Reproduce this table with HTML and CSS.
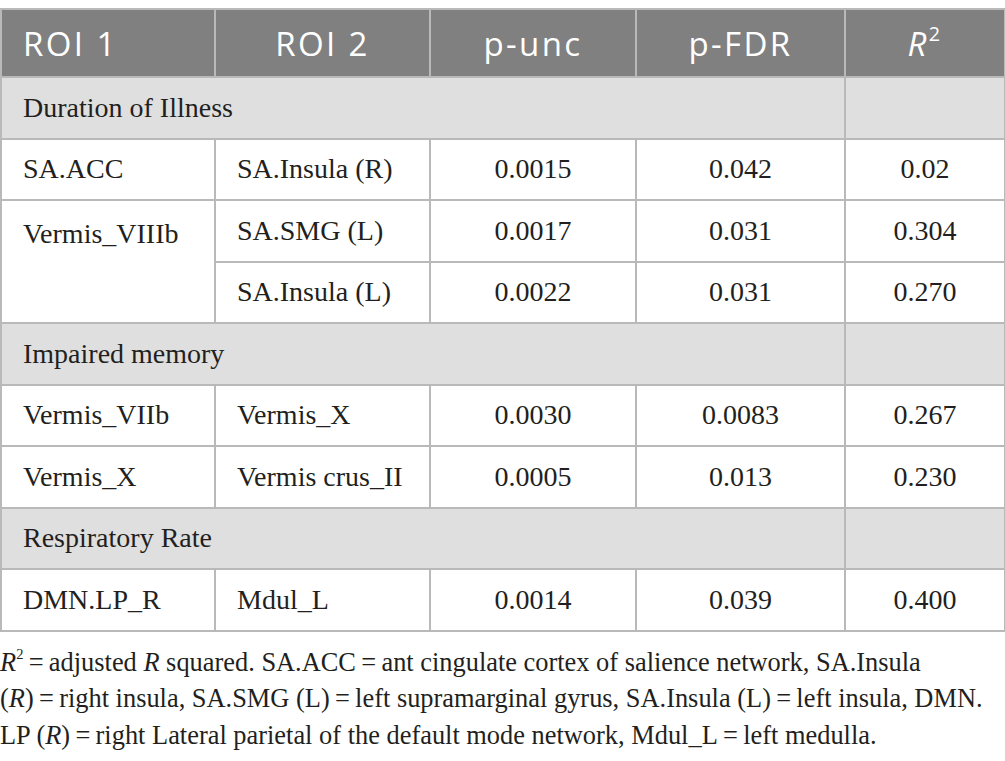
FILE: index.html
```html
<!DOCTYPE html>
<html lang="en">
<head>
<meta charset="utf-8">
<title>Table</title>
<link rel="stylesheet" href="styles.css">
</head>
<body>
<div class="page">
<table class="data">
  <colgroup>
    <col class="c1"><col class="c2"><col class="c3"><col class="c4"><col class="c5">
  </colgroup>
  <thead>
    <tr class="head">
      <th class="left">ROI 1</th>
      <th>ROI 2</th>
      <th>p-unc</th>
      <th>p-FDR</th>
      <th><i>R</i><sup>2</sup></th>
    </tr>
  </thead>
  <tbody>
    <tr class="group"><td colspan="4">Duration of Illness</td><td></td></tr>
    <tr><td>SA.ACC</td><td>SA.Insula (R)</td><td class="num">0.0015</td><td class="num">0.042</td><td class="num">0.02</td></tr>
    <tr><td rowspan="2" class="top">Vermis_VIIIb</td><td>SA.SMG (L)</td><td class="num">0.0017</td><td class="num">0.031</td><td class="num">0.304</td></tr>
    <tr><td>SA.Insula (L)</td><td class="num">0.0022</td><td class="num">0.031</td><td class="num">0.270</td></tr>
    <tr class="group"><td colspan="4">Impaired memory</td><td></td></tr>
    <tr><td>Vermis_VIIb</td><td>Vermis_X</td><td class="num">0.0030</td><td class="num">0.0083</td><td class="num">0.267</td></tr>
    <tr><td>Vermis_X</td><td>Vermis crus_II</td><td class="num">0.0005</td><td class="num">0.013</td><td class="num">0.230</td></tr>
    <tr class="group"><td colspan="4">Respiratory Rate</td><td></td></tr>
    <tr><td>DMN.LP_R</td><td>Mdul_L</td><td class="num">0.0014</td><td class="num">0.039</td><td class="num">0.400</td></tr>
  </tbody>
</table>
<p class="note"><i>R</i><sup>2</sup>&thinsp;=&thinsp;adjusted <i>R</i> squared. SA.ACC&thinsp;=&thinsp;ant cingulate cortex of salience network, SA.Insula<br>(<i>R</i>)&thinsp;=&thinsp;right insula, SA.SMG (L)&thinsp;=&thinsp;left supramarginal gyrus, SA.Insula (L)&thinsp;=&thinsp;left insula, DMN.<br>LP (<i>R</i>)&thinsp;=&thinsp;right Lateral parietal of the default mode network, Mdul_L&thinsp;=&thinsp;left medulla.</p>
</div>
</body>
</html>
```

FILE: styles.css
```css
html, body {
  margin: 0;
  padding: 0;
  background: #ffffff;
}

.page {
  padding-top: 8px;
  width: 1004px;
  color: #231f20;
  font-family: "Liberation Serif", "Times New Roman", serif;
}

.data {
  width: 1004px;
  border-collapse: collapse;
  table-layout: fixed;
  font-size: 28px;
}

.c1 { width: 214px; }
.c2 { width: 215px; }
.c3 { width: 206px; }
.c4 { width: 209px; }
.c5 { width: 160px; }

.data th,
.data td {
  border: 2px solid #b9b9b9;
  padding: 0 0 0 21px;
  text-align: left;
  vertical-align: middle;
  font-weight: normal;
}

.head th {
  height: 66px;
  background: #7f807f;
  color: #ffffff;
  font-family: "Open Sans", "Liberation Sans", sans-serif;
  font-size: 33px;
  letter-spacing: 2.4px;
  text-align: center;
  padding: 0;
  line-height: 1;
}

.head th.left {
  text-align: left;
  padding-left: 21px;
}

.head sup {
  font-size: 0.6em;
  vertical-align: 0.75em;
  line-height: 0;
}

.data tbody tr {
  height: 61.5px;
}

.group td {
  background: #e0dfe0;
}

.data td.num {
  text-align: center;
  padding: 0;
}

.data td.top {
  vertical-align: top;
  padding-top: 17px;
}

.note {
  margin: 12px 0 0 0;
  font-size: 26.4px;
  line-height: 36.5px;
}

.note sup {
  font-size: 0.55em;
  vertical-align: 0.8em;
  line-height: 0;
}
```
